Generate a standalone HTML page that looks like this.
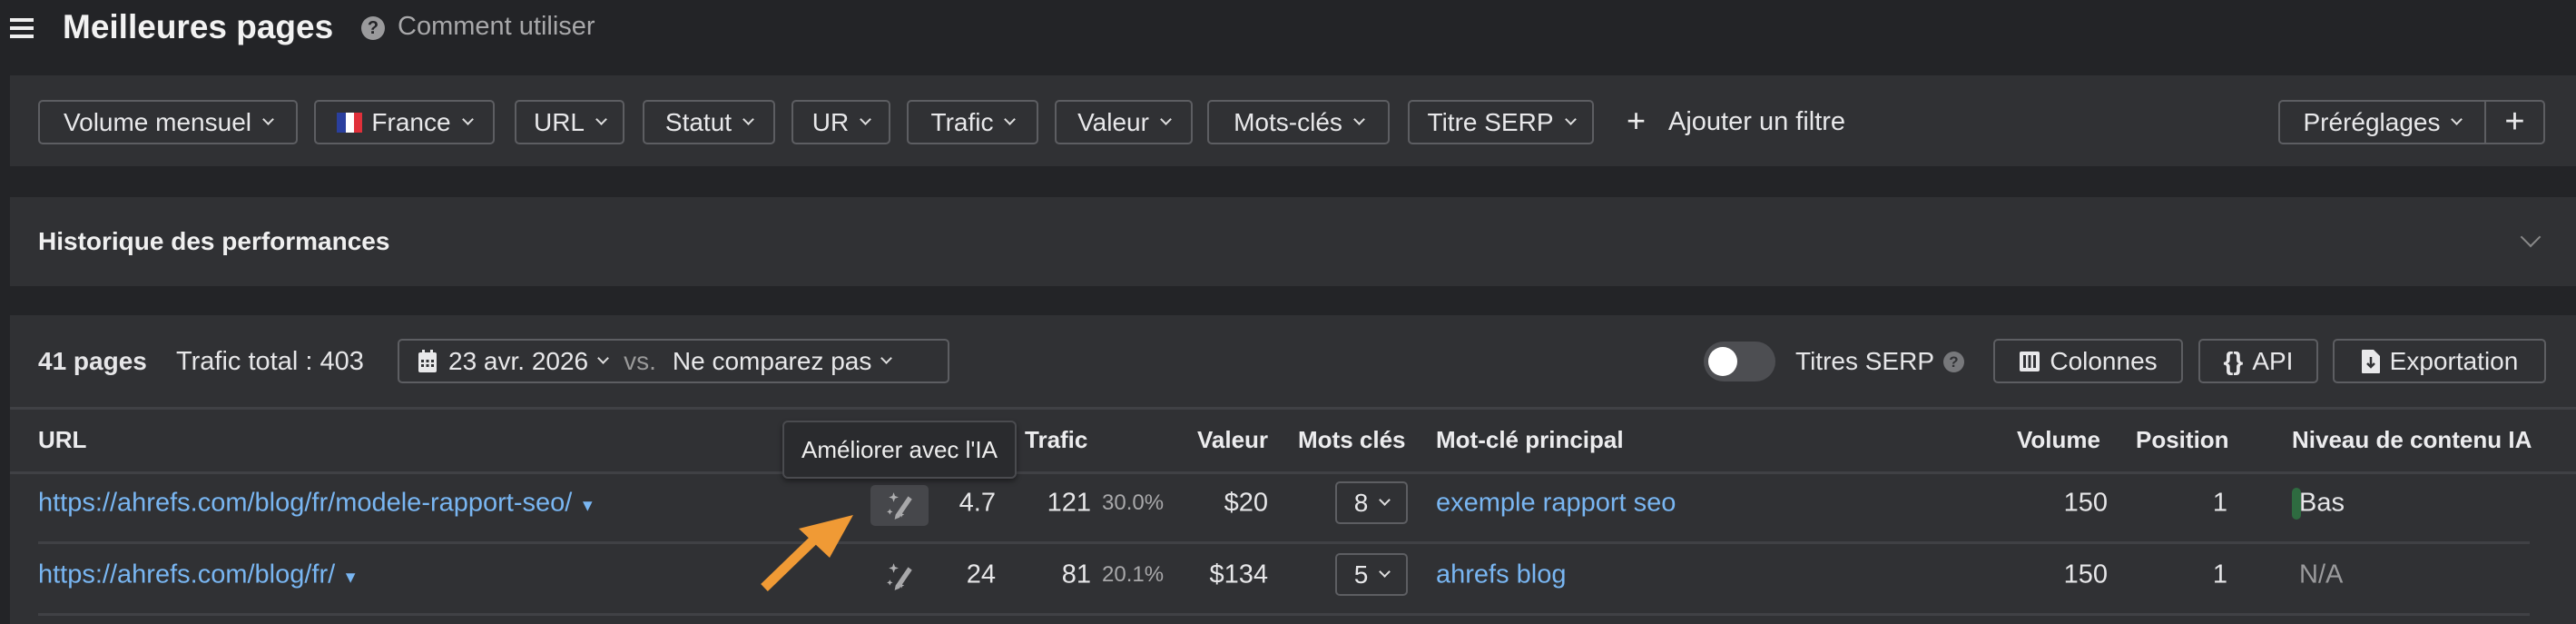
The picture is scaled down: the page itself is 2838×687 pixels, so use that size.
<!DOCTYPE html>
<html><head><meta charset="utf-8"><style>
*{box-sizing:border-box;margin:0;padding:0}
body{width:2838px;height:680px;background:#232427;font-family:"Liberation Sans",sans-serif;color:#e6e6e8;position:relative;overflow:hidden}
.a{position:absolute;white-space:nowrap}
.panel{position:absolute;background:#303134;left:11px;width:2827px}
.btn{position:absolute;border:2px solid #5d5e62;border-radius:5px;height:49px;display:flex;align-items:center;justify-content:center;font-size:28px;color:#e8e8ea;gap:10px;white-space:nowrap}
.chev{display:inline-block;width:9px;height:9px;border-right:2px solid #ddd;border-bottom:2px solid #ddd;transform:rotate(45deg);margin-top:-6px;margin-left:4px}
.th{position:absolute;font-size:26px;font-weight:bold;color:#ececee;top:469px;white-space:nowrap}
.c{position:absolute;font-size:29px;transform:translateY(-50%);white-space:nowrap}
.r{text-align:right}
.link{color:#79b6f2}
.line{position:absolute;height:3px;background:#404145}
</style></head><body>
<div class="a" style="left:11px;top:20px;width:26px;height:4px;background:#eee"></div>
<div class="a" style="left:11px;top:29px;width:26px;height:4px;background:#eee"></div>
<div class="a" style="left:11px;top:38px;width:26px;height:4px;background:#eee"></div>
<div class="a" style="left:69px;top:9px;font-size:37px;font-weight:bold;color:#f2f2f2">Meilleures pages</div>
<div class="a" style="left:398px;top:18px;width:26px;height:26px;border-radius:50%;background:#9a9a9c;color:#232427;font-size:20px;font-weight:bold;text-align:center;line-height:26px">?</div>
<div class="a" style="left:438px;top:13px;font-size:29px;color:#a8a8aa">Comment utiliser</div>

<div class="panel" style="top:83px;height:100px"></div>
<div class="btn" style="left:42px;top:110px;width:286px">Volume mensuel<span class="chev"></span></div>
<div class="btn" style="left:346px;top:110px;width:199px"><span style="display:flex;width:28px;height:22px"><i style="flex:1;background:#2a3f9e"></i><i style="flex:1;background:#fff"></i><i style="flex:1;background:#e0303a"></i></span>France<span class="chev"></span></div>
<div class="btn" style="left:567px;top:110px;width:121px">URL<span class="chev"></span></div>
<div class="btn" style="left:708px;top:110px;width:146px">Statut<span class="chev"></span></div>
<div class="btn" style="left:872px;top:110px;width:109px">UR<span class="chev"></span></div>
<div class="btn" style="left:999px;top:110px;width:145px">Trafic<span class="chev"></span></div>
<div class="btn" style="left:1162px;top:110px;width:152px">Valeur<span class="chev"></span></div>
<div class="btn" style="left:1330px;top:110px;width:201px">Mots-clés<span class="chev"></span></div>
<div class="btn" style="left:1551px;top:110px;width:205px">Titre SERP<span class="chev"></span></div>
<div class="a" style="left:1792px;top:115px;font-size:36px;color:#eee;line-height:36px">+</div>
<div class="a" style="left:1838px;top:118px;font-size:29px;color:#e8e8ea">Ajouter un filtre</div>
<div class="btn" style="left:2510px;top:110px;width:229px;border-radius:5px 0 0 5px">Préréglages<span class="chev"></span></div>
<div class="btn" style="left:2737px;top:110px;width:67px;border-radius:0 5px 5px 0;font-size:38px">+</div>

<div class="panel" style="top:217px;height:98px"></div>
<div class="a" style="left:42px;top:250px;font-size:28px;font-weight:bold;color:#f0f0f0">Historique des performances</div>
<div class="a" style="left:2780px;top:253px;width:16px;height:16px;border-right:2px solid #888;border-bottom:2px solid #888;transform:rotate(45deg)"></div>

<div class="panel" style="top:347px;height:340px"></div>
<div class="a" style="left:42px;top:382px;font-size:28px;font-weight:bold">41 pages</div>
<div class="a" style="left:194px;top:382px;font-size:29px">Trafic total : 403</div>
<div class="btn" style="left:438px;top:373px;width:608px;justify-content:flex-start;padding-left:20px;gap:12px">
<svg width="22" height="26" viewBox="0 0 22 26"><rect x="1" y="3" width="20" height="22" rx="2" fill="#e8e8ea"/><rect x="5" y="0" width="3" height="6" fill="#e8e8ea"/><rect x="14" y="0" width="3" height="6" fill="#e8e8ea"/><g fill="#303134"><rect x="4" y="11" width="3" height="3"/><rect x="9.5" y="11" width="3" height="3"/><rect x="15" y="11" width="3" height="3"/><rect x="4" y="16" width="3" height="3"/><rect x="9.5" y="16" width="3" height="3"/><rect x="15" y="16" width="3" height="3"/></g></svg>
23 avr. 2026<span class="chev" style="margin-left:0"></span><span style="color:#999;margin-left:6px">vs.</span><span style="margin-left:6px">Ne comparez pas</span><span class="chev" style="margin-left:0"></span></div>
<div class="a" style="left:1877px;top:376px;width:79px;height:44px;border-radius:22px;background:#4d4e52"></div>
<div class="a" style="left:1882px;top:382px;width:32px;height:32px;border-radius:50%;background:#fff"></div>
<div class="a" style="left:1978px;top:382px;font-size:28px">Titres SERP</div>
<div class="a" style="left:2141px;top:387px;width:23px;height:23px;border-radius:50%;background:#77787b;color:#303134;font-size:17px;font-weight:bold;text-align:center;line-height:23px">?</div>
<div class="btn" style="left:2196px;top:373px;width:209px"><svg width="24" height="24" viewBox="0 0 24 24"><rect x="1" y="1" width="22" height="22" rx="2" fill="#e8e8ea"/><g fill="#303134"><rect x="5" y="5" width="3" height="14"/><rect x="10.5" y="5" width="3" height="14"/><rect x="16" y="5" width="3" height="14"/></g></svg>Colonnes</div>
<div class="btn" style="left:2422px;top:373px;width:132px"><b style="font-size:28px">{}</b>API</div>
<div class="btn" style="left:2570px;top:373px;width:235px"><svg width="22" height="28" viewBox="0 0 22 28"><path d="M2 1h12l7 7v18a1 1 0 0 1-1 1H2a1 1 0 0 1-1-1V2a1 1 0 0 1 1-1z" fill="#e8e8ea"/><path d="M11 9v11M7 16l4 4 4-4" stroke="#303134" stroke-width="2.5" fill="none"/></svg>Exportation</div>
<div class="line" style="left:11px;width:2827px;top:448px"></div>

<div class="th" style="left:42px">URL</div>
<div class="th" style="left:1129px">Trafic</div>
<div class="th" style="left:1319px">Valeur</div>
<div class="th" style="left:1430px">Mots clés</div>
<div class="th" style="left:1582px">Mot-clé principal</div>
<div class="th" style="left:2222px">Volume</div>
<div class="th" style="left:2353px">Position</div>
<div class="th" style="left:2525px">Niveau de contenu IA</div>
<div class="line" style="left:11px;width:2827px;top:519px"></div>

<div class="c link" style="left:42px;top:554px">https://ahrefs.com/blog/fr/modele-rapport-seo/ <span style="font-size:18px">▼</span></div>
<div class="a" style="left:959px;top:534px;width:64px;height:45px;border-radius:5px;background:#46474b"></div>
<svg class="a" style="left:976px;top:540px" width="32" height="34" viewBox="0 0 30 32"><path d="M8 2l1.3 3.7L13 7l-3.7 1.3L8 12l-1.3-3.7L3 7l3.7-1.3z M4 19l.9 2.1L7 22l-2.1.9L4 25l-.9-2.1L1 22l2.1-.9z M16 22l.9 2.1L19 25l-2.1.9L16 28l-.9-2.1L13 25l2.1-.9z" fill="#b0b0b2"/><path d="M23 6l4 3-13 19-5 2 1-5z" fill="#a8a8aa"/></svg>
<div class="c r" style="left:1030px;width:67px;top:554px">4.7</div>
<div class="c r" style="left:1130px;width:72px;top:554px">121</div>
<div class="c" style="left:1214px;top:554px;font-size:24px;color:#a8a8aa">30.0%</div>
<div class="c r" style="left:1300px;width:97px;top:554px">$20</div>
<div class="btn" style="left:1471px;top:530px;width:80px;height:47px">8<span class="chev"></span></div>
<div class="c link" style="left:1582px;top:554px">exemple rapport seo</div>
<div class="c r" style="left:2222px;width:100px;top:554px">150</div>
<div class="c r" style="left:2400px;width:54px;top:554px">1</div>
<div class="a" style="left:2525px;top:537px;width:10px;height:35px;border-radius:5px;background:#2e6b40"></div>
<div class="c" style="left:2533px;top:554px">Bas</div>
<div class="line" style="left:42px;width:2745px;top:596px"></div>

<div class="c link" style="left:42px;top:633px">https://ahrefs.com/blog/fr/ <span style="font-size:18px">▼</span></div>
<svg class="a" style="left:976px;top:618px" width="32" height="34" viewBox="0 0 30 32"><path d="M8 2l1.3 3.7L13 7l-3.7 1.3L8 12l-1.3-3.7L3 7l3.7-1.3z M4 19l.9 2.1L7 22l-2.1.9L4 25l-.9-2.1L1 22l2.1-.9z M16 22l.9 2.1L19 25l-2.1.9L16 28l-.9-2.1L13 25l2.1-.9z" fill="#b0b0b2"/><path d="M23 6l4 3-13 19-5 2 1-5z" fill="#a8a8aa"/></svg>
<div class="c r" style="left:1030px;width:67px;top:633px">24</div>
<div class="c r" style="left:1130px;width:72px;top:633px">81</div>
<div class="c" style="left:1214px;top:633px;font-size:24px;color:#a8a8aa">20.1%</div>
<div class="c r" style="left:1290px;width:107px;top:633px">$134</div>
<div class="btn" style="left:1471px;top:609px;width:80px;height:47px">5<span class="chev"></span></div>
<div class="c link" style="left:1582px;top:633px">ahrefs blog</div>
<div class="c r" style="left:2222px;width:100px;top:633px">150</div>
<div class="c r" style="left:2400px;width:54px;top:633px">1</div>
<div class="c" style="left:2533px;top:633px;color:#9a9a9c">N/A</div>
<div class="line" style="left:42px;width:2745px;top:675px"></div>

<div class="a" style="left:862px;top:463px;width:258px;height:64px;background:#2a2b2e;border:2px solid #4a4b4f;border-radius:6px;font-size:26px;color:#eee;display:flex;align-items:center;justify-content:center;box-shadow:0 3px 6px rgba(0,0,0,.4)">Améliorer avec l'IA</div>

<svg class="a" style="left:830px;top:555px" width="130" height="100" viewBox="0 0 130 100"><path d="M12 92 L70 36" stroke="#f09a35" stroke-width="11" fill="none"/><path d="M110 12 L50 27 L84 59 z" fill="#f09a35"/></svg>
</body></html>
